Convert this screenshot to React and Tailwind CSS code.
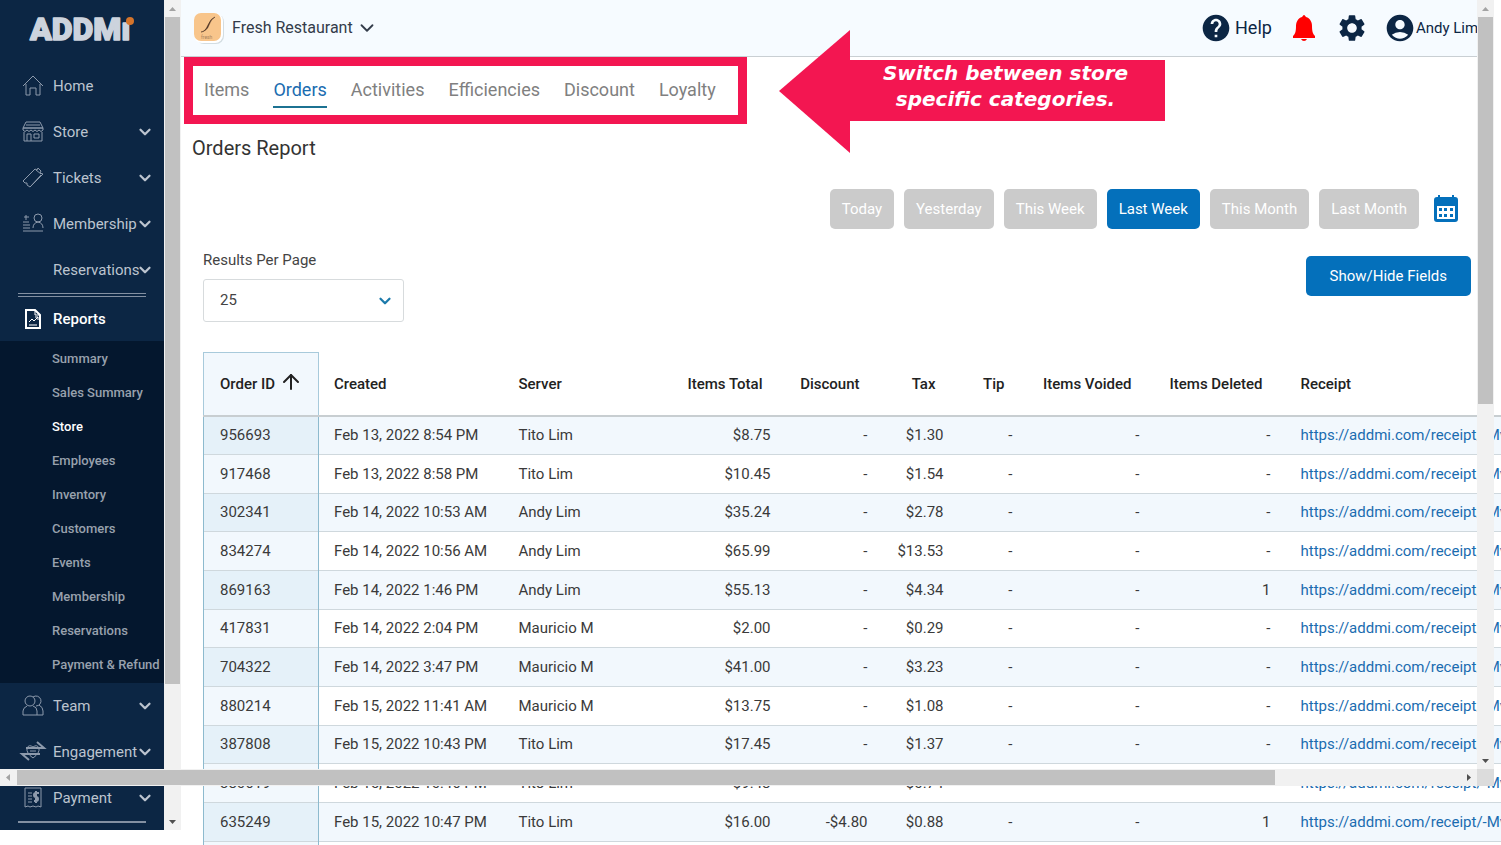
import { MdHelp, MdSettings, MdAccountCircle } from 'react-icons/md';
import { ArrowUp, ChevronDown } from 'lucide-react';

const HomeIcon = () => (
  <>
    <path d="M1 11 11 1l10 10" />
    <path d="M4 9v11h4v-7h6v7h4V9" />
  </>
);

const StoreIcon = () => (
  <>
    <path d="M4 1h14l3 6H1zM1 7v2q2 3 4 0 2 3 4 0 2 3 4 0 2 3 4 0 2 3 4 0V7M2 11v9h18v-9M1 7h20" />
    <path d="M5 20v-7h4v7M12 13h5v4h-5zM4 4h14" />
  </>
);

const TicketIcon = () => (
  <>
    <path d="M1 14 13 2l2 1 1-2 3 3-1 2 3 1L10 18l-2 2-3-2 0-2-2 0z" />
    <path d="m14 3 5 4M9 19 19 8" />
  </>
);

const MembershipIcon = () => (
  <>
    <circle cx="16" cy="5" r="4" />
    <path d="M11 15q0-5 5-6 5 1 5 6M1 18h20M1 15h7M1 12h7M1 9h6M4 2v5M2 4h5" />
  </>
);

const ReportsIcon = () => (
  <>
    <path strokeWidth="2" d="M4 2h9l5 5v13H4z" />
    <path d="M13 2v5h5M7 17h8M7 14l3-3 2 2 4-4M13 9h3v3" />
  </>
);

const TeamIcon = () => (
  <>
    <circle cx="8" cy="6" r="5" />
    <path d="M1 20v-4q0-3 4-5M11 11q4 1 4 5v4H1" />
    <path d="M11 2a5 5 0 1 1 3 9M17 10q4 2 4 6v4h-6" />
  </>
);

const EngagementIcon = () => (
  <>
    <path strokeWidth="2" d="M4 7h18l-7-6M18 13H0l7 6" />
    <path d="M11 17Q4 12 5 7q2-4 6-1 4-3 6 1 1 5-6 10zM8 10h6" />
  </>
);

const PaymentIcon = () => (
  <>
    <path d="M3 1h16v19l-3-1-2 1-3-1-3 1-2-1-3 1zM6 6h4M6 9h4M6 12h4M6 15h4" />
    <path strokeWidth="2" d="M17 6h-3q-2 0-2 2t2 2 2 2-2 2h-2M14 4v12" />
  </>
);

const topLinks = [
  { name: 'Home', icon: HomeIcon },
  { name: 'Store', icon: StoreIcon, expandable: true },
  { name: 'Tickets', icon: TicketIcon, expandable: true },
  { name: 'Membership', icon: MembershipIcon, expandable: true },
  { name: 'Reservations', expandable: true },
];

const reportLinks = [
  'Summary', 'Sales Summary', 'Store', 'Employees', 'Inventory',
  'Customers', 'Events', 'Membership', 'Reservations', 'Payment & Refund',
];

const bottomLinks = [
  { name: 'Team', icon: TeamIcon, expandable: true },
  { name: 'Engagement', icon: EngagementIcon, expandable: true },
  { name: 'Payment', icon: PaymentIcon, expandable: true },
];

const tabs = ['Items', 'Orders', 'Activities', 'Efficiencies', 'Discount', 'Loyalty'];
const ranges = ['Today', 'Yesterday', 'This Week', 'Last Week', 'This Month', 'Last Month'];

const columns = [
  { name: 'Created', width: 'w-[185px]' },
  { name: 'Server', width: 'w-[130px]' },
  { name: 'Items Total', width: 'w-[152px]', right: true },
  { name: 'Discount', width: 'w-[97px]', right: true },
  { name: 'Tax', width: 'w-[76px]', right: true },
  { name: 'Tip', width: 'w-[69px]', right: true },
  { name: 'Items Voided', width: 'w-[127px]', right: true },
  { name: 'Items Deleted', width: 'w-[131px]', right: true },
  { name: 'Receipt', width: 'w-[319px]' },
];

const orders = [
  ['956693', 'Feb 13, 2022 8:54 PM', 'Tito Lim', '$8.75', '-', '$1.30', '-', '-', '-'],
  ['917468', 'Feb 13, 2022 8:58 PM', 'Tito Lim', '$10.45', '-', '$1.54', '-', '-', '-'],
  ['302341', 'Feb 14, 2022 10:53 AM', 'Andy Lim', '$35.24', '-', '$2.78', '-', '-', '-'],
  ['834274', 'Feb 14, 2022 10:56 AM', 'Andy Lim', '$65.99', '-', '$13.53', '-', '-', '-'],
  ['869163', 'Feb 14, 2022 1:46 PM', 'Andy Lim', '$55.13', '-', '$4.34', '-', '-', '1'],
  ['417831', 'Feb 14, 2022 2:04 PM', 'Mauricio M', '$2.00', '-', '$0.29', '-', '-', '-'],
  ['704322', 'Feb 14, 2022 3:47 PM', 'Mauricio M', '$41.00', '-', '$3.23', '-', '-', '-'],
  ['880214', 'Feb 15, 2022 11:41 AM', 'Mauricio M', '$13.75', '-', '$1.08', '-', '-', '-'],
  ['387808', 'Feb 15, 2022 10:43 PM', 'Tito Lim', '$17.45', '-', '$1.37', '-', '-', '-'],
  ['380619', 'Feb 15, 2022 10:46 PM', 'Tito Lim', '$9.48', '-', '$0.74', '-', '-', '-'],
  ['635249', 'Feb 15, 2022 10:47 PM', 'Tito Lim', '$16.00', '-$4.80', '$0.88', '-', '-', '1'],
  ['635250', 'Feb 15, 2022 10:52 PM', 'Tito Lim', '$12.00', '-', '$0.94', '-', '-', '-'],
];

const NavLink = ({ name, icon: Icon, expandable, active }) => (
  <a
    href="#"
    className={`flex shrink-0 items-center pr-[10px] pl-[22px] text-[15px] ${active ? 'h-11 font-medium text-white' : 'h-[46px] text-[#bcc4cf]'}`}
  >
    <span className="w-[31px] shrink-0">
      {Icon && (
        <svg width="22" height="22" viewBox="0 0 22 22" fill="none" stroke="currentColor" className={`overflow-visible ${active ? 'text-white' : 'text-[#8d9aac]'}`}>
          <Icon />
        </svg>
      )}
    </span>
    <span className="min-w-0 flex-1">{name}</span>
    {expandable && <ChevronDown size={18} strokeWidth={3} className="-ml-2 shrink-0" />}
  </a>
);

const Triangle = ({ points, className }) => (
  <svg width="17" height="17" viewBox="0 0 17 17" fill="currentColor" className={`shrink-0 ${className}`}>
    <polygon points={points} />
  </svg>
);

const UP = '5,11 12,11 8.5,7';
const DOWN = '5,7 12,7 8.5,11';
const LEFT = '10,5 10,12 6,8.5';
const RIGHT = '7,5 7,12 11,8.5';

const Sidebar = () => (
  <aside className="flex shrink-0 items-start">
    <div className="w-[164px] bg-[#0c2644] pb-[7px]">
      {/* Logo, the orange circle is the dot of the last letter */}
      <svg width="164" height="63" viewBox="0 0 164 63" role="img" aria-label="ADDMi" className="block">
        <text
          x="30"
          y="40"
          fontFamily="Roboto, sans-serif"
          fontWeight="900"
          fontSize="32"
          fill="#ccd3dd"
          stroke="#ccd3dd"
          strokeWidth="1.5"
          strokeLinejoin="round"
        >
          ADDMı
        </text>
        <circle cx="130" cy="21" r="4" fill="#d5742b" />
      </svg>
      <nav>
        {topLinks.map((link) => <NavLink key={link.name} {...link} />)}
        <div className="mx-[18px] h-1 border-y border-[#8390a2]" />
        <NavLink name="Reports" icon={ReportsIcon} active />
        <div className="bg-[#04172e] py-px">
          {reportLinks.map((name) => (
            <a
              key={name}
              href="#"
              className={`flex h-[34px] items-center pl-[52px] text-[13px] font-medium whitespace-nowrap ${name === 'Store' ? 'text-white' : 'text-[#98a1ad]'}`}
            >
              {name}
            </a>
          ))}
        </div>
        {bottomLinks.map((link) => <NavLink key={link.name} {...link} />)}
        <div className="mx-[18px] h-[2px] bg-[#8390a2]" />
      </nav>
    </div>
    {/* Sidebar scrollbar */}
    <div className="flex w-[17px] flex-col self-stretch bg-[#f1f1f1]">
      <Triangle points={UP} className="text-[#a3a3a3]" />
      <div className="mx-px h-[667px] bg-[#c1c1c1]" />
      <Triangle points={DOWN} className="mt-auto text-[#505050]" />
    </div>
  </aside>
);

const Header = () => (
  <header className="mr-6 flex h-[57px] items-center overflow-hidden border-b border-[#c9cfd3] bg-[#f6fbff] text-[#0c2644]">
    <svg width="32" height="34" viewBox="0 0 32 34" className="ml-3 shrink-0">
      <rect x="3" y="3" width="28" height="30" rx="8" fill="#d3dde2" />
      <rect x="1" y="2" width="29" height="30" rx="8" fill="#ffffff" />
      <rect x="1" y="2" width="27" height="28" rx="7" fill="#f8c58b" />
      <path d="M8 21q4 0 7-7t7-8q-4 2-6 8t-8 7z" fill="#4a3022" stroke="#4a3022" strokeWidth=".5" />
      <text x="8" y="28" fontSize="5" fontFamily="Roboto, sans-serif" fill="#a9835c">fresh</text>
    </svg>
    <button type="button" className="ml-[7px] flex items-center gap-[3px] text-base text-[#333c4a]">
      Fresh Restaurant
      <ChevronDown size={22} strokeWidth={2} />
    </button>
    <div className="ml-auto flex w-[277px] shrink-0 items-center whitespace-nowrap">
      <a href="#" className="flex items-center gap-[3px] text-lg">
        <MdHelp size={32} />
        Help
      </a>
      <button type="button" aria-label="Notifications" className="ml-5">
        <svg width="24" height="28" viewBox="0 0 24 28" fill="#ff0000">
          <path d="M12 1c1 0 1 1 2 2 4 1 6 5 6 9 0 6 1 8 3 10v2H1v-2c2-2 3-4 3-10 0-4 2-8 6-9 1-1 1-2 2-2zM9 25h6q-1 2-3 2t-3-2z" />
        </svg>
      </button>
      <button type="button" aria-label="Settings" className="ml-5">
        <MdSettings size={32} />
      </button>
      <button type="button" className="ml-4 flex items-center text-[15px]">
        <MdAccountCircle size={32} />
        Andy Lim
      </button>
    </div>
  </header>
);

const OrdersTable = () => (
  <table className="mt-[30px] ml-[22px] w-[1401px] table-fixed border-collapse text-[15px] text-[#3a3a3a]">
    <thead>
      <tr className="h-[63px] border-b-2 border-[#c8ced1]">
        <th className="w-[115px] border border-b-2 border-[#a8cadb] border-b-[#c8ced1] bg-[#f2f8fd] pl-4 text-left font-medium text-[#222]">
          <span className="flex items-center gap-1">
            Order ID
            <ArrowUp size={24} strokeWidth={2} className="mb-1" />
          </span>
        </th>
        {columns.map(({ name, width, right }) => (
          <th key={name} className={`${width} pt-[2px] font-medium whitespace-nowrap text-[#222] ${right ? 'pr-[23px] text-right' : 'pl-[15px] text-left'}`}>
            {name}
          </th>
        ))}
      </tr>
    </thead>
    <tbody>
      {orders.map(([id, created, server, ...amounts]) => (
        <tr key={id} className="h-[39px] border-b border-[#cfd8dd] odd:bg-[#f2f8fd] nth-[3n]:h-[38px] odd:[&>th]:bg-[#e5f1f9]">
          <th className="border-x border-[#8dbace] bg-[#f2f8fd] pl-4 text-left font-normal">{id}</th>
          <td className="pl-[15px] whitespace-nowrap">{created}</td>
          <td className="pl-[15px] whitespace-nowrap">{server}</td>
          {amounts.map((amount, i) => (
            <td key={i} className="pr-[15px] text-right">{amount}</td>
          ))}
          <td className="pl-[15px] whitespace-nowrap">
            <a href="#" className="text-[#1a6cb0]">https://addmi.com/receipt/-MvT8kqZ</a>
          </td>
        </tr>
      ))}
    </tbody>
  </table>
);

const Callout = () => (
  <div className="absolute top-[30px] left-[779px] flex h-[123px] w-[386px]">
    <svg width="71" height="123" viewBox="0 0 71 123" fill="#f31651" className="shrink-0">
      <polygon points="71,0 71,123 0,61" />
    </svg>
    <p className="mt-[30px] mb-8 flex-1 bg-[#f31651] pr-1 text-center font-['DejaVu_Sans',sans-serif] text-xl leading-[26px] font-bold text-white italic">
      Switch between store
      <br />
      specific categories.
    </p>
  </div>
);

const PageScrollbars = () => (
  <>
    <div className="absolute top-0 right-[7px] bottom-[76px] flex w-[17px] flex-col bg-[#f1f1f1]">
      <Triangle points={UP} className="text-[#a3a3a3]" />
      <div className="mx-px h-[387px] bg-[#c1c1c1]" />
      <Triangle points={DOWN} className="mt-auto text-[#505050]" />
    </div>
    <div className="absolute right-[7px] bottom-[59px] left-0 flex h-[17px] bg-[#f1f1f1]">
      <Triangle points={LEFT} className="text-[#a3a3a3]" />
      <div className="my-px w-[1258px] bg-[#c1c1c1]" />
      <Triangle points={RIGHT} className="ml-auto text-[#505050]" />
      <div className="w-[17px] bg-[#dcdcdc]" />
    </div>
  </>
);

const App = () => {
  return (
    <div className="relative flex h-screen items-start overflow-hidden bg-white font-[Roboto,sans-serif]">
      <Sidebar />
      <main className="min-w-0 flex-1">
        <Header />
        {/* Report tabs */}
        <nav className="ml-[3px] flex h-[67px] w-fit items-start gap-6 border-9 border-[#f31651] pt-3 pr-[22px] pl-[11px] text-lg leading-6 text-[#808080]">
          {tabs.map((tab) => (
            <a key={tab} href="#" className={tab === 'Orders' ? 'border-b-2 border-[#1c7292] pb-1 text-[#1a6cb0]' : ''}>
              {tab}
            </a>
          ))}
        </nav>
        <h1 className="mt-[10px] ml-[11px] text-xl leading-7 text-[#333]">Orders Report</h1>

        {/* Date range */}
        <div className="mt-[27px] mr-[42px] flex items-center justify-end gap-[10px]">
          {ranges.map((range) => (
            <button
              key={range}
              type="button"
              className={`h-10 rounded-[5px] px-3 text-[15px] text-white ${range === 'Last Week' ? 'bg-[#0470bb]' : 'bg-[#cbcbcb]'}`}
            >
              {range}
            </button>
          ))}
          <button type="button" aria-label="Pick dates" className="ml-1">
            <svg width="26" height="28" viewBox="0 0 26 28">
              <path fill="#0470bb" d="M5 0h2v2h12V0h2v2h1q3 0 3 3v19q0 3-3 3H4q-3 0-3-3V5q0-3 3-3h1z" />
              <path fill="#ffffff" d="M4 11h18v13H4z" />
              <path fill="#0470bb" d="M6 13h3v3H6zM11 13h3v3h-3zM17 13h3v3h-3zM6 19h3v3H6zM11 19h3v3h-3zM17 19h3v3h-3z" />
            </svg>
          </button>
        </div>

        <div className="mt-[19px] mr-[30px] ml-[22px] flex items-start justify-between">
          <div>
            <label htmlFor="per-page" className="block text-[15px] leading-6 text-[#444]">Results Per Page</label>
            <div className="relative mt-[7px] w-[201px]">
              <select id="per-page" defaultValue="25" className="h-[43px] w-full appearance-none rounded-[3px] border border-[#d7dbdd] bg-white px-4 text-[15px] text-[#444]">
                <option>25</option>
                <option>50</option>
                <option>100</option>
              </select>
              <ChevronDown size={18} strokeWidth={3} className="pointer-events-none absolute top-[13px] right-[10px] text-[#1c7aab]" />
            </div>
          </div>
          <button type="button" className="mt-2 h-10 rounded-[5px] bg-[#0470bb] px-6 text-[15px] text-white">
            Show/Hide Fields
          </button>
        </div>

        <OrdersTable />
      </main>
      <Callout />
      <PageScrollbars />
    </div>
  );
};

export default App;
